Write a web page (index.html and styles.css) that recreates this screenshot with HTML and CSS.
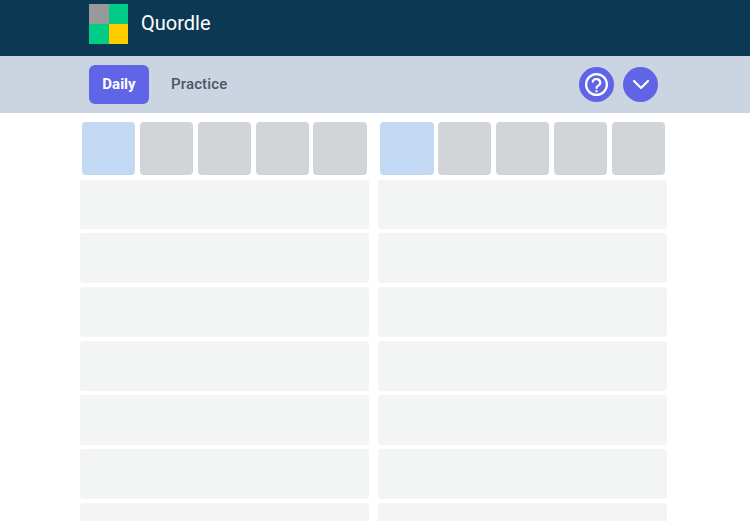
FILE: index.html
```html
<!DOCTYPE html>
<html lang="en">
<head>
<meta charset="utf-8">
<title>Quordle</title>
<link rel="stylesheet" href="styles.css">
</head>
<body>
<header class="topbar">
  <svg class="logo" width="39" height="40" viewBox="0 0 39 40" aria-hidden="true">
    <rect width="20" height="20" fill="#999999"/>
    <rect x="20" width="19" height="20" fill="#00cc88"/>
    <rect y="20" width="20" height="20" fill="#00cc88"/>
    <rect x="20" y="20" width="19" height="20" fill="#ffcc00"/>
  </svg>
  <span class="brand">Quordle</span>
</header>
<nav class="subbar">
  <a class="tab tab-active">Daily</a>
  <a class="tab">Practice</a>
  <div class="actions">
    <button class="round" aria-label="Help">
      <svg width="25" height="25" viewBox="0 0 25 25" fill="none" stroke="#fff" stroke-width="2.2" stroke-linecap="round" stroke-linejoin="round">
        <circle cx="12.5" cy="12.5" r="10.400"/>
        <path d="M8.700 9.700a3.900 3.900 0 0 1 7.600 1.200c0 2.500-3.800 2.800-3.800 5"/>
        <path d="M12.500 19.200v.1"/>
      </svg>
    </button>
    <button class="round" aria-label="Menu">
      <svg width="20" height="20" viewBox="0 0 20 20" fill="none" stroke="#fff" stroke-width="2.200" stroke-linecap="round" stroke-linejoin="round">
        <path d="M3 7 10 14l7-7"/>
      </svg>
    </button>
  </div>
</nav>
<main class="boards">
  <section class="board">
    <div class="tiles">
      <div class="tile tile-active"></div><div class="tile"></div><div class="tile"></div><div class="tile"></div><div class="tile"></div>
    </div>
    <div class="row"></div><div class="row"></div><div class="row"></div><div class="row"></div><div class="row"></div><div class="row"></div><div class="row"></div>
  </section>
  <section class="board">
    <div class="tiles">
      <div class="tile tile-active"></div><div class="tile"></div><div class="tile"></div><div class="tile"></div><div class="tile"></div>
    </div>
    <div class="row"></div><div class="row"></div><div class="row"></div><div class="row"></div><div class="row"></div><div class="row"></div><div class="row"></div>
  </section>
</main>
</body>
</html>
```
FILE: styles.css
```css
html, body {
  margin: 0;
  height: 100%;
  overflow: hidden;
  background: #fff;
  font-family: Roboto, "Liberation Sans", sans-serif;
}
.topbar {
  height: 56px;
  box-sizing: border-box;
  background: #0b3954;
  display: flex;
  align-items: flex-start;
  padding: 4px 0 0 89px;
}
.logo { display: block; }
.brand {
  margin: 8px 0 0 13px;
  color: #fff;
  font-size: 20px;
  line-height: 23px;
}
.subbar {
  height: 57px;
  box-sizing: border-box;
  background: #cbd5e1;
  display: flex;
  align-items: center;
  padding: 0 92px 1px 89px;
}
.tab {
  height: 39px;
  padding: 0 16px;
  margin-right: 6px;
  border-radius: 6px;
  display: flex;
  align-items: center;
  color: #4b5563;
  font-size: 15px;
  font-weight: 500;
  letter-spacing: 0.01em;
}
.tab-active {
  width: 60px;
  box-sizing: border-box;
  padding: 0;
  justify-content: center;
  background: #6065e8;
  color: #fff;
  font-weight: 700;
  letter-spacing: 0;
}
.actions {
  margin-left: auto;
  display: flex;
  gap: 9px;
}
.round {
  width: 35px;
  height: 35px;
  padding: 0;
  border: 0;
  border-radius: 50%;
  background: #6065e8;
  display: flex;
  align-items: center;
  justify-content: center;
}
.boards {
  display: flex;
  gap: 9.2px;
  padding: 9px 0 0 79.8px;
}
.board {
  width: 289px;
  display: flex;
  flex-direction: column;
  gap: 4px;
}
.tiles {
  display: grid;
  grid-template-columns: repeat(5, 53.2px);
  gap: 4.6px;
  padding: 0 0 0.6px 2.4px;
}
.tile {
  height: 53px;
  border-radius: 4px;
  background: #d1d5d8;
}
.tile-active { background: #c3d8f2; }
.row {
  height: 49.85px;
  border-radius: 3px;
  background: #f3f4f4;
}
```
